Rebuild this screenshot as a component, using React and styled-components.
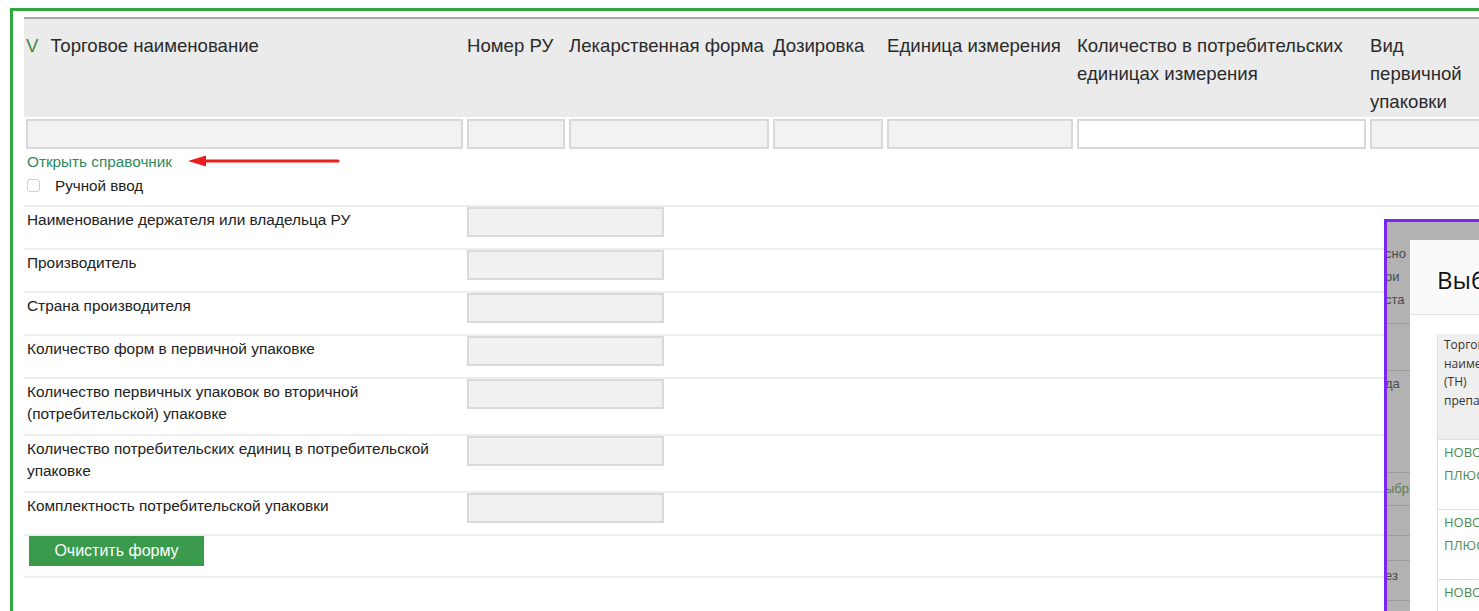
import styled, { createGlobalStyle } from 'styled-components'

const GlobalStyle = createGlobalStyle`
    html, body {
        margin: 0;
        padding: 0;
        background: #fff;
        overflow: hidden;
    }
    body {
        font-family: "Liberation Sans", Arial, sans-serif;
        color: #222;
    }
`

const COLS = '441px 102px 204px 114px 190px 293px 200px'

/* WRAPPERS */
const Page = styled.div`
    position: relative;
    width: 1479px;
    height: 611px;
    overflow: hidden;
`
const Frame = styled.div`
    box-sizing: border-box;
    margin: 8px 0 0 10px;
    width: 1600px;
    height: 700px;
    border: 3px solid #2ea83f;
    padding: 6px 0 0 11px;
`
/* PRODUCT TABLE */
const HeadRow = styled.div`
    display: grid;
    grid-template-columns: ${COLS};
    height: 98px;
    background: #ebebeb;
    border-top: 2px solid #a9a9a9;
`
const HeadCell = styled.div`
    max-width: ${p => (p.$narrow ? '96px' : 'none')};
    padding: 13px 2px 0;
    font-size: 18.6px;
    line-height: 28px;
    color: #2a2a2a;
`
const Mark = styled.span`
    color: #3d8b40;
    margin-right: 12px;
`
const FilterRow = styled.div`
    display: grid;
    grid-template-columns: ${COLS};
    padding-top: 2px;
`
const FilterInput = styled.input`
    box-sizing: border-box;
    width: calc(100% - 4px);
    height: 30px;
    margin: 0 2px;
    border: 2px solid #d8d8d8;
    background: ${p => (p.$blank ? '#fff' : '#f2f2f2')};
`
const LinkLine = styled.div`
    display: flex;
    align-items: center;
    margin-top: 4px;
    padding-left: 3px;
    height: 18px;
`
const DirLink = styled.a`
    font-size: 15.3px;
    color: #2f8a5c;
    text-decoration: none;
    cursor: pointer;
`
const Arrow = styled.svg`
    margin-left: 16px;
    margin-top: -2px;
`
const ManualLine = styled.label`
    display: flex;
    align-items: center;
    height: 20px;
    margin: 4px 0 10px;
    padding-left: 3px;
    font-size: 15.2px;
    color: #222;
`
const Check = styled.span`
    box-sizing: border-box;
    width: 13px;
    height: 13px;
    margin-right: 15px;
    border: 1px solid #cfcfcf;
    border-radius: 3px;
    background: #fff;
`
/* DETAILS FORM */
const FieldRow = styled.div`
    display: grid;
    grid-template-columns: 441px 199px;
    align-items: start;
    padding-bottom: 9px;
    border-top: 2px solid #eeeeee;
`
const FieldLabel = styled.div`
    padding: 2px 0 0 3px;
    font-size: 15.4px;
    line-height: 22px;
    color: #222;
`
const FieldInput = styled.input`
    box-sizing: border-box;
    width: 197px;
    height: 30px;
    margin: 0 0 2px 2px;
    border: 2px solid #dadada;
    background: #f1f1f1;
`
const ActionRow = styled.div`
    padding: 0 0 10px 5px;
    border-top: 2px solid #eeeeee;
    border-bottom: 2px solid #eeeeee;
`
const ClearButton = styled.button`
    display: block;
    width: 175px;
    height: 30px;
    border: none;
    background: #3b9b4c;
    color: #fff;
    font-family: "Liberation Sans", Arial, sans-serif;
    font-size: 16px;
    cursor: pointer;
`
/* PICKER SNAPSHOT */
const Snapshot = styled.div`
    position: absolute;
    left: 1384px;
    top: 219px;
    width: 300px;
    height: 500px;
    display: flex;
    padding-top: 18px;
    border: 3px solid #7a25f5;
    background: #b2b2b2;
`
const Backdrop = styled.div`
    width: 23px;
    flex: none;
    overflow: hidden;
    display: flex;
    flex-direction: column;
`
const Ghost = styled.div`
    height: ${p => p.$h}px;
    padding-top: ${p => p.$pt || 0}px;
    margin-left: -2px;
    border-bottom: 1px solid #9c9c9c;
    font-size: 13px;
    line-height: 23px;
    color: ${p => p.$tone || '#4a4a4a'};
    white-space: pre;
`
const Modal = styled.div`
    flex: 1;
    background: #fff;
`
const ModalHead = styled.div`
    height: 75px;
    padding: 3px 0 0 27px;
    box-sizing: border-box;
    border-bottom: 1px solid #e2e2e2;
    background: #fafafa;
    font-family: "Open Sans", "Liberation Sans", sans-serif;
    font-size: 24px;
    line-height: 73px;
    color: #111;
    white-space: nowrap;
`
const ModalBody = styled.div`
    padding: 19px 0 0 27px;
`
const PickTable = styled.div`
    width: 88px;
    border-left: 1px solid #dedede;
`
const PickHead = styled.div`
    height: 103px;
    padding: 2px 6px 0;
    background: #efefef;
    font-family: "Open Sans", "Liberation Sans", sans-serif;
    font-size: 12px;
    line-height: 18.5px;
    color: #333;
`
const PickRow = styled.div`
    height: 68px;
    padding: 1px 6px 0;
    border-top: 1px solid #dedede;
    font-family: "Open Sans", "Liberation Sans", sans-serif;
    font-size: 13px;
    line-height: 23px;
    color: #4b8a52;
`

const heads = [
    'Номер РУ',
    'Лекарственная форма',
    'Дозировка',
    'Единица измерения',
    'Количество в потребительских единицах измерения',
    'Вид первичной упаковки',
]

const fields = [
    'Наименование держателя или владельца РУ',
    'Производитель',
    'Страна производителя',
    'Количество форм в первичной упаковке',
    'Количество первичных упаковок во вторичной (потребительской) упаковке',
    'Количество потребительских единиц в потребительской упаковке',
    'Комплектность потребительской упаковки',
]

const ghosts = [
    { h: 81, pt: 2, text: 'сно\nри\nста' },
    { h: 46 },
    { h: 100, pt: 1, text: 'да' },
    { h: 28, pt: 4, text: 'ыбр', tone: '#587a5b' },
    { h: 29 },
    { h: 24 },
    { h: 36, pt: 3, text: 'ез' },
    { h: 60 },
]

const App = () => {
    return (
        <Page>
            <GlobalStyle />
            <Frame>
                <HeadRow>
                    <HeadCell><Mark>V</Mark>Торговое наименование</HeadCell>
                    {heads.map((h, i) => (
                        <HeadCell key={h} $narrow={i === heads.length - 1}>{h}</HeadCell>
                    ))}
                </HeadRow>
                <FilterRow>
                    {[0, 1, 2, 3, 4, 5, 6].map(i => <FilterInput key={i} $blank={i === 5} readOnly />)}
                </FilterRow>

                <LinkLine>
                    <DirLink>Открыть справочник</DirLink>
                    <Arrow width="152" height="12" viewBox="0 0 152 12">
                        <line x1="14" y1="6" x2="150" y2="6" stroke="#e81e1e" strokeWidth="3" strokeLinecap="round" />
                        <polygon points="0,6 18,0.5 18,11.5" fill="#e81e1e" />
                    </Arrow>
                </LinkLine>
                <ManualLine>
                    <Check />
                    Ручной ввод
                </ManualLine>

                {fields.map(f => (
                    <FieldRow key={f}>
                        <FieldLabel>{f}</FieldLabel>
                        <FieldInput readOnly />
                    </FieldRow>
                ))}
                <ActionRow>
                    <ClearButton>Очистить форму</ClearButton>
                </ActionRow>
            </Frame>

            <Snapshot>
                <Backdrop>
                    {ghosts.map((g, i) => (
                        <Ghost key={i} $h={g.h} $pt={g.pt} $tone={g.tone}>{g.text}</Ghost>
                    ))}
                </Backdrop>
                <Modal>
                    <ModalHead>Выбор препарата</ModalHead>
                    <ModalBody>
                        <PickTable>
                            <PickHead>Торговое наименование (ТН) препарата</PickHead>
                            <PickRow>НОВОПАССИТ ПЛЮС</PickRow>
                            <PickRow>НОВОПАССИТ ПЛЮС</PickRow>
                            <PickRow>НОВОПАССИТ ПЛЮС</PickRow>
                        </PickTable>
                    </ModalBody>
                </Modal>
            </Snapshot>
        </Page>
    )
}

export default App
